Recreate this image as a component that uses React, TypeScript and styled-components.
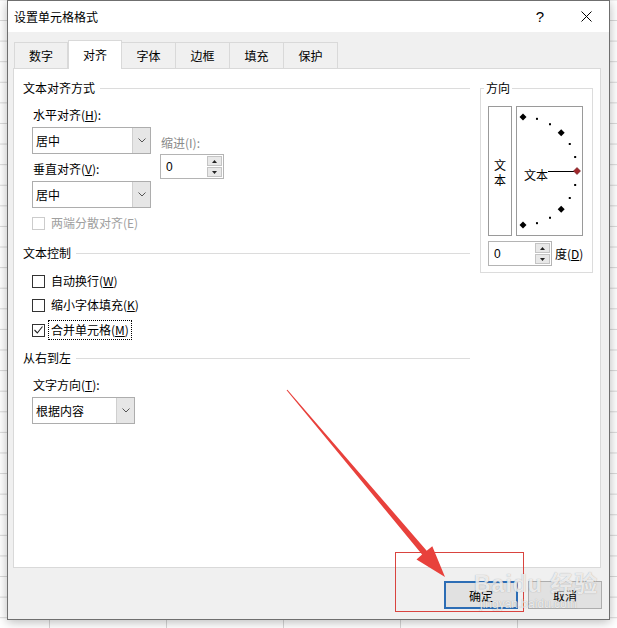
import React from 'react';
import styled, { createGlobalStyle } from 'styled-components';

const FONT = `"Noto Sans CJK SC", "Microsoft YaHei", sans-serif`;

const GlobalStyle = createGlobalStyle`
  html, body {
    margin: 0;
    padding: 0;
    background: #fff;
  }
  body {
    font-family: ${FONT};
    font-size: 12px;
    color: #000;
    overflow: hidden;
  }
`;

// spreadsheet behind the dialog
const Page = styled.div`
  position: relative;
  width: 617px;
  height: 628px;
  overflow: hidden;
  background:
    linear-gradient(to right, #d6d6d6 1px, transparent 1px) 49px 0 / 117px 100%,
    linear-gradient(to bottom, #d9d9d9 1px, transparent 1px) 0 20px / 100% 20.6px,
    #fff;
`;

const Dialog = styled.div`
  box-sizing: border-box;
  margin-left: 7px;
  width: 603px;
  height: 620px;
  border: 1px solid #6f6f6f;
  background: #f0f0f0;
  box-shadow: 0 2px 10px rgba(0, 0, 0, 0.28);
  display: flex;
  flex-direction: column;
`;

const TitleBar = styled.div`
  height: 31px;
  background: #fff;
  display: flex;
  align-items: center;
  padding-left: 6px;
`;

const Title = styled.div`
  flex: 1;
  line-height: 16px;
`;

const TitleButton = styled.div`
  width: 46px;
  height: 31px;
  display: flex;
  align-items: center;
  justify-content: center;
  font-family: "Liberation Sans", sans-serif;
  font-size: 15px;
`;

const TabsRow = styled.div`
  height: 28px;
  margin-top: 8px;
  padding-left: 6px;
  display: flex;
  align-items: flex-end;
`;

const Tab = styled.div<{ $active?: boolean; $first?: boolean }>`
  box-sizing: border-box;
  width: 54px;
  height: ${(p) => (p.$active ? 29 : 26)}px;
  margin-bottom: ${(p) => (p.$active ? -1 : 0)}px;
  border: 1px solid #d9d9d9;
  border-bottom: none;
  border-left-width: ${(p) => (p.$first || p.$active ? 1 : 0)}px;
  background: ${(p) => (p.$active ? '#fff' : '#f0f0f0')};
  position: relative;
  z-index: ${(p) => (p.$active ? 1 : 0)};
  display: flex;
  align-items: center;
  justify-content: center;
  padding-bottom: ${(p) => (p.$active ? 1 : 0)}px;
`;

const Panel = styled.div`
  box-sizing: border-box;
  margin: 0 8px 0 5px;
  height: 500px;
  background: #fff;
  border: 1px solid #d9d9d9;
  padding: 11px 7px 0 9px;
  display: flex;
  gap: 10px;
`;

const LeftCol = styled.div`
  width: 447px;
  display: flex;
  flex-direction: column;
`;

const RightCol = styled.div`
  width: 113px;
`;

const GroupHeader = styled.div<{ $mt?: number }>`
  display: flex;
  align-items: center;
  gap: 5px;
  line-height: 16px;
  margin-top: ${(p) => p.$mt ?? 0}px;
  &::after {
    content: '';
    flex: 1;
    height: 1px;
    background: #dcdcdc;
  }
`;

const FieldLabel = styled.div<{ $mt?: number; $muted?: boolean }>`
  line-height: 16px;
  padding-left: 1px;
  margin-top: ${(p) => p.$mt ?? 0}px;
  color: ${(p) => (p.$muted ? '#8a8a8a' : '#000')};
`;

const AlignRow = styled.div`
  display: flex;
  gap: 9px;
  padding-left: 9px;
  margin-top: 11px;
`;

const SubCol = styled.div<{ $mt?: number }>`
  display: flex;
  flex-direction: column;
  margin-top: ${(p) => p.$mt ?? 0}px;
`;

const Combo = styled.div<{ $w: number; $mt?: number }>`
  box-sizing: border-box;
  width: ${(p) => p.$w}px;
  height: 27px;
  margin-top: ${(p) => p.$mt ?? 0}px;
  border: 1px solid #adadad;
  background: #fff;
  display: flex;
`;

const ComboText = styled.div`
  flex: 1;
  padding-left: 3px;
  line-height: 25px;
`;

const ComboDrop = styled.div`
  width: 17px;
  background: #e6e6e6;
  border-left: 1px solid #cfcfcf;
  display: flex;
  align-items: center;
  justify-content: center;
`;

const SpinBox = styled.div<{ $mt?: number }>`
  box-sizing: border-box;
  width: 64px;
  height: 25px;
  margin-top: ${(p) => p.$mt ?? 0}px;
  border: 1px solid #b4b4b4;
  background: #fff;
  display: flex;
  align-items: center;
  padding: 0 1px 0 5px;
`;

const SpinValue = styled.div`
  flex: 1;
  font-family: "Liberation Sans", sans-serif;
  font-size: 12px;
`;

const SpinButtons = styled.div`
  width: 15px;
  height: 21px;
  display: flex;
  flex-direction: column;
  gap: 1px;
`;

const SpinArrow = styled.div`
  flex: 1;
  box-sizing: border-box;
  background: #e8e8e8;
  border: 1px solid #c4c4c4;
  display: flex;
  align-items: center;
  justify-content: center;
`;

const CheckRow = styled.div<{ $mt?: number }>`
  display: flex;
  align-items: center;
  height: 20px;
  padding-left: 9px;
  margin-top: ${(p) => p.$mt ?? 0}px;
`;

const CheckBox = styled.div<{ $disabled?: boolean }>`
  box-sizing: border-box;
  width: 13px;
  height: 13px;
  margin-right: 3px;
  border: 1px solid ${(p) => (p.$disabled ? '#cccccc' : '#333')};
  background: #fff;
  display: flex;
  align-items: center;
  justify-content: center;
`;

const CheckLabel = styled.div<{ $disabled?: boolean; $focused?: boolean }>`
  padding: 0 2px;
  line-height: 18px;
  border: 1px dotted ${(p) => (p.$focused ? '#000' : 'transparent')};
  color: ${(p) => (p.$disabled ? '#a0a0a0' : '#000')};
`;

const Fieldset = styled.fieldset`
  margin: 0;
  width: 113px;
  box-sizing: border-box;
  padding: 10px 6px 6px 7px;
  border: 1px solid #dcdcdc;
`;

const Legend = styled.legend`
  padding: 0 2px;
  margin-left: -4px;
  line-height: 16px;
`;

const OrientRow = styled.div`
  display: flex;
  gap: 4px;
`;

const VerticalBox = styled.div`
  box-sizing: border-box;
  width: 24px;
  height: 130px;
  border: 1px solid #9a9a9a;
  display: flex;
  flex-direction: column;
  align-items: center;
  justify-content: center;
  line-height: 15px;
  padding-top: 2px;
`;

const DialBox = styled.div`
  box-sizing: border-box;
  width: 67px;
  height: 130px;
  border: 1px solid #9a9a9a;
`;

const DegreeRow = styled.div`
  display: flex;
  align-items: center;
  gap: 3px;
  margin-top: 5px;
`;

const Footer = styled.div`
  display: flex;
  justify-content: flex-end;
  gap: 10px;
  padding: 13px 7px 0 0;
`;

const Button = styled.div<{ $primary?: boolean }>`
  box-sizing: border-box;
  width: 74px;
  height: 28px;
  background: #e1e1e1;
  border: ${(p) => (p.$primary ? '2px solid #2c6db5' : '1px solid #adadad')};
  display: flex;
  align-items: center;
  justify-content: center;
`;

const Annotation = styled.svg`
  position: absolute;
  left: 0;
  top: 0;
  pointer-events: none;
`;

const Watermark = styled.div`
  position: absolute;
  left: 474px;
  top: 571px;
  display: flex;
  flex-direction: column;
  align-items: flex-start;
  color: rgba(255, 255, 255, 0.8);
  text-shadow: 0 0 1px rgba(90, 90, 90, 0.55);
  pointer-events: none;
`;

const WatermarkLogo = styled.div`
  font-family: "Liberation Sans", "Noto Sans CJK SC", sans-serif;
  font-size: 23px;
  font-weight: 700;
  line-height: 26px;
  letter-spacing: 1px;
`;

const WatermarkUrl = styled.div`
  font-family: "Liberation Sans", sans-serif;
  font-size: 12px;
  line-height: 14px;
  margin-left: 6px;
`;

const Chevron = () => (
  <svg width="8" height="5" viewBox="0 0 8 5">
    <polyline points="0.5,0.5 4,4 7.5,0.5" fill="none" stroke="#555" strokeWidth="1" />
  </svg>
);

const Triangle = ({ up }: { up?: boolean }) => (
  <svg width="5" height="3" viewBox="0 0 5 3">
    <polygon points={up ? '0,3 2.5,0 5,3' : '0,0 5,0 2.5,3'} fill="#222" />
  </svg>
);

const Spin = ({ value, mt }: { value: string; mt?: number }) => (
  <SpinBox $mt={mt}>
    <SpinValue>{value}</SpinValue>
    <SpinButtons>
      <SpinArrow>
        <Triangle up />
      </SpinArrow>
      <SpinArrow>
        <Triangle />
      </SpinArrow>
    </SpinButtons>
  </SpinBox>
);

const Select = ({ value, width, mt }: { value: string; width: number; mt?: number }) => (
  <Combo $w={width} $mt={mt}>
    <ComboText>{value}</ComboText>
    <ComboDrop>
      <Chevron />
    </ComboDrop>
  </Combo>
);

const Check = ({
  label,
  checked,
  disabled,
  focused,
  mt,
}: {
  label: React.ReactNode;
  checked?: boolean;
  disabled?: boolean;
  focused?: boolean;
  mt?: number;
}) => (
  <CheckRow $mt={mt}>
    <CheckBox $disabled={disabled}>
      {checked && (
        <svg width="9" height="8" viewBox="0 0 9 8">
          <polyline points="0.5,4 3.3,7 8.5,0.5" fill="none" stroke="#222" strokeWidth="1.1" />
        </svg>
      )}
    </CheckBox>
    <CheckLabel $disabled={disabled} $focused={focused}>
      {label}
    </CheckLabel>
  </CheckRow>
);

// orientation dial: half circle of marks, centre (6,64), radius 54
const Dial = () => {
  const cx = 6;
  const cy = 64;
  const r = 54;
  const marks = [];
  for (let k = -6; k <= 6; k++) {
    const a = (k * 15 * Math.PI) / 180;
    const x = cx + r * Math.cos(a);
    const y = cy - r * Math.sin(a);
    if (k === 0) continue;
    if (k % 3 === 0) {
      marks.push(
        <polygon key={k} points={`${x},${y - 3.5} ${x + 3.5},${y} ${x},${y + 3.5} ${x - 3.5},${y}`} fill="#000" />
      );
    } else {
      marks.push(<rect key={k} x={x - 1} y={y - 1} width="2" height="2" fill="#000" />);
    }
  }
  return (
    <svg width="65" height="128" viewBox="0 0 65 128">
      {marks}
      <text x="7" y="73" fontFamily={FONT} fontSize="12" fill="#000">
        文本
      </text>
      <line x1="31" y1="64.5" x2="57" y2="64.5" stroke="#000" strokeWidth="1" />
      <polygon points="60,60.5 63.5,64 60,67.5 56.5,64" fill="#a1282c" stroke="#6b1a1d" strokeWidth="0.6" />
    </svg>
  );
};

const tabs = ['数字', '对齐', '字体', '边框', '填充', '保护'];

export default function App() {
  return (
    <Page>
      <GlobalStyle />
      <Dialog>
        <TitleBar>
          <Title>设置单元格格式</Title>
          <TitleButton>?</TitleButton>
          <TitleButton>
            <svg width="11" height="11" viewBox="0 0 11 11">
              <path d="M0.5 0.5 L10.5 10.5 M10.5 0.5 L0.5 10.5" stroke="#000" strokeWidth="1" />
            </svg>
          </TitleButton>
        </TitleBar>

        <TabsRow>
          {tabs.map((t, i) => (
            <Tab key={t} $first={i === 0} $active={t === '对齐'}>
              {t}
            </Tab>
          ))}
        </TabsRow>

        <Panel>
          <LeftCol>
            <GroupHeader>文本对齐方式</GroupHeader>
            <AlignRow>
              <SubCol>
                <FieldLabel>
                  水平对齐(<u>H</u>):
                </FieldLabel>
                <Select value="居中" width={119} mt={4} />
                <FieldLabel $mt={7}>
                  垂直对齐(<u>V</u>):
                </FieldLabel>
                <Select value="居中" width={119} mt={4} />
              </SubCol>
              <SubCol $mt={28}>
                <FieldLabel $muted>缩进(I):</FieldLabel>
                <Spin value="0" mt={3} />
              </SubCol>
            </AlignRow>
            <Check mt={5} disabled label="两端分散对齐(E)" />

            <GroupHeader $mt={12}>文本控制</GroupHeader>
            <Check
              mt={10}
              label={
                <>
                  自动换行(<u>W</u>)
                </>
              }
            />
            <Check
              mt={4}
              label={
                <>
                  缩小字体填充(<u>K</u>)
                </>
              }
            />
            <Check
              mt={5}
              checked
              focused
              label={
                <>
                  合并单元格(<u>M</u>)
                </>
              }
            />

            <GroupHeader $mt={10}>从右到左</GroupHeader>
            <AlignRow>
              <SubCol>
                <FieldLabel>
                  文字方向(<u>T</u>):
                </FieldLabel>
                <Select value="根据内容" width={103} mt={4} />
              </SubCol>
            </AlignRow>
          </LeftCol>

          <RightCol>
            <Fieldset>
              <Legend>方向</Legend>
              <OrientRow>
                <VerticalBox>
                  <span>文</span>
                  <span>本</span>
                </VerticalBox>
                <DialBox>
                  <Dial />
                </DialBox>
              </OrientRow>
              <DegreeRow>
                <Spin value="0" />
                <span>
                  度(<u>D</u>)
                </span>
              </DegreeRow>
            </Fieldset>
          </RightCol>
        </Panel>

        <Footer>
          <Button $primary>确定</Button>
          <Button>取消</Button>
        </Footer>
      </Dialog>

      <Annotation width="617" height="628" viewBox="0 0 617 628">
        <rect x="395.5" y="552.5" width="128" height="59" fill="none" stroke="#d9443f" strokeWidth="1" />
        <polygon
          points="286.6,390.3 422.1,554.5 416.5,559.4 445,577 432.3,546.2 426.7,550.7 287.4,389.7"
          fill="#e8413c"
        />
      </Annotation>

      <Watermark>
        <WatermarkLogo>Baidu 经验</WatermarkLogo>
        <WatermarkUrl>jingyan.baidu.com</WatermarkUrl>
      </Watermark>
    </Page>
  );
}
